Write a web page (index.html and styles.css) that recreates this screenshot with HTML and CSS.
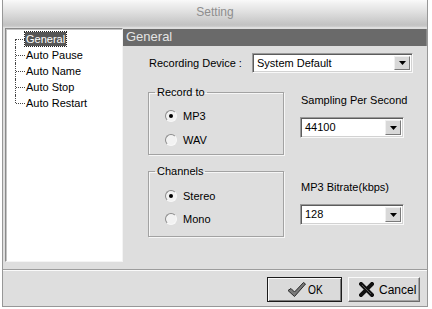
FILE: index.html
```html
<!DOCTYPE html>
<html>
<head>
<meta charset="utf-8">
<link rel="stylesheet" href="styles.css">
</head>
<body>
<div class="window">
  <div class="titlebar"><span class="title">Setting</span></div>
  <div class="main">
    <div class="tree">
      <ul class="tree-list">
        <li class="node first"><span class="label selected">General</span></li>
        <li class="node"><span class="label">Auto Pause</span></li>
        <li class="node"><span class="label">Auto Name</span></li>
        <li class="node"><span class="label">Auto Stop</span></li>
        <li class="node last"><span class="label">Auto Restart</span></li>
      </ul>
    </div>
    <div class="panel">
      <div class="panel-head">General</div>
      <div class="panel-body">
        <div class="device-row">
          <span class="device-label">Recording Device :</span>
          <div class="combo combo-wide">
            <span class="combo-text">System Default</span>
            <span class="combo-btn"><svg width="7" height="4" viewBox="0 0 7 4"><path d="M0 0H7L3.5 4Z" fill="#000"/></svg></span>
          </div>
        </div>
        <div class="cols">
          <div class="col-left">
            <fieldset class="group g1">
              <legend>Record to</legend>
              <div class="radio-row"><span class="radio checked"></span><span>MP3</span></div>
              <div class="radio-row"><span class="radio"></span><span>WAV</span></div>
            </fieldset>
            <fieldset class="group g2">
              <legend>Channels</legend>
              <div class="radio-row"><span class="radio checked"></span><span>Stereo</span></div>
              <div class="radio-row"><span class="radio"></span><span>Mono</span></div>
            </fieldset>
          </div>
          <div class="col-right">
            <div class="field-label l1">Sampling Per Second</div>
            <div class="combo combo-small">
              <span class="combo-text">44100</span>
              <span class="combo-btn"><svg width="7" height="4" viewBox="0 0 7 4"><path d="M0 0H7L3.5 4Z" fill="#000"/></svg></span>
            </div>
            <div class="field-label l2">MP3 Bitrate(kbps)</div>
            <div class="combo combo-small">
              <span class="combo-text">128</span>
              <span class="combo-btn"><svg width="7" height="4" viewBox="0 0 7 4"><path d="M0 0H7L3.5 4Z" fill="#000"/></svg></span>
            </div>
          </div>
        </div>
      </div>
    </div>
  </div>
  <div class="footer">
    <button class="btn btn-ok">
      <svg class="icon" width="19" height="17" viewBox="0 0 19 17"><path d="M1 9.5L4 7.5L7.5 11L16.5 1.5L18.5 3L7.5 15.5Z" fill="#7a7a7a" stroke="#2a2a2a" stroke-width="1" stroke-linejoin="round"/></svg>
      <span class="btn-text">OK</span>
    </button>
    <button class="btn btn-cancel">
      <svg class="icon" width="15" height="15" viewBox="0 0 15 15"><path d="M2 2L13 13M13 2L2 13" stroke="#111" stroke-width="4" stroke-linecap="square"/><path d="M3 3L12 12" stroke="#555" stroke-width="1"/></svg>
      <span class="btn-text">Cancel</span>
    </button>
  </div>
</div>
</body>
</html>
```
FILE: styles.css
```css
* { box-sizing: border-box; }
html, body { margin: 0; padding: 0; background: #fff; }
body {
  font-family: "Liberation Sans", Arial, sans-serif;
  font-size: 11px;
  color: #000;
  width: 432px;
  height: 309px;
  overflow: hidden;
}
.window {
  margin-left: 2px;
  width: 426px;
  height: 307px;
  border: 1px solid #979797;
  border-top: none;
  background: #dedede;
  display: flex;
  flex-direction: column;
}
.titlebar {
  height: 27px;
  flex: none;
  background: linear-gradient(#fafafa 0px, #f0f0f0 4px, #e6e6e6 9px, #d2d2d2 18px, #c2c2c2 25px, #cfcfcf 27px);
  display: flex;
  justify-content: center;
  align-items: flex-start;
  padding-top: 5px;
}
.title {
  font-size: 12px;
  color: #8e8e8e;
  line-height: 14px;
}
.main {
  height: 242px;
  flex: none;
  display: flex;
  align-items: flex-start;
  padding: 1px 0 0 2px;
}
.tree {
  width: 118px;
  height: 234px;
  flex: none;
  background: #fff;
  border: 1px solid;
  border-color: #8a8a8a #f4f4f4 #f4f4f4 #8a8a8a;
  box-shadow: inset 1px 1px #c4c4c4;
  padding-top: 2px;
}
.tree-list {
  list-style: none;
  margin: 0 0 0 9px;
  padding: 0;
}
.node {
  position: relative;
  height: 16px;
  line-height: 16px;
  padding-left: 10px;
  display: flex;
  align-items: center;
}
.node::before {
  content: "";
  position: absolute;
  left: 0;
  top: 0;
  bottom: 0;
  border-left: 1px dotted #444;
}
.node.first::before { top: 8px; }
.node.last::before { bottom: 8px; }
.node::after {
  content: "";
  position: absolute;
  left: 1px;
  top: 8px;
  width: 9px;
  border-top: 1px dotted #444;
}
.label {
  padding: 0 1px;
  line-height: 14px;
  height: 14px;
}
.selected {
  background: #565656;
  color: #fff;
  outline: 1px dotted #222;
}
.panel {
  flex: 1;
  height: 234px;
  display: flex;
  flex-direction: column;
}
.panel-head {
  margin-top: 1px;
  height: 17px;
  background: #6a6a6a;
  color: #e4e4e4;
  font-size: 13px;
  line-height: 16px;
  padding-left: 3px;
  border-right: 1px solid #8a8a8a;
}
.panel-body {
  padding: 7px 0 0 25px;
}
.device-row {
  display: flex;
  align-items: center;
  height: 20px;
}
.device-label {
  width: 104px;
  padding-left: 1px;
}
.combo {
  display: flex;
  background: #fff;
  border: 1px solid;
  border-color: #9a9a9a #f8f8f8 #f8f8f8 #9a9a9a;
  box-shadow: inset 1px 1px #5c5c5c, inset -1px -1px #d2d2d2;
  padding: 2px 2px 2px 3px;
  align-items: stretch;
}
.combo-wide { width: 161px; height: 20px; }
.combo-small { width: 104px; height: 21px; }
.combo-text {
  flex: 1;
  line-height: 15px;
  padding-left: 1px;
}
.combo-btn {
  width: 16px;
  background: #d8d8d8;
  border: 1px solid;
  border-color: #f0f0f0 #7a7a7a #7a7a7a #f0f0f0;
  display: flex;
  align-items: center;
  justify-content: center;
}
.cols {
  display: flex;
  margin-top: 13px;
}
.col-left {
  width: 136px;
  flex: none;
  display: flex;
  flex-direction: column;
}
.group {
  margin: 0;
  min-width: 0;
  border: 1px solid #a2a2a2;
  box-shadow: 1px 1px #f6f6f6, inset 1px 1px #f6f6f6;
  padding: 0 0 0 16px;
}
.group legend {
  margin-left: -10px;
  padding: 0 2px;
  line-height: 13px;
  height: 13px;
}
.g1 { padding-top: 9px; padding-bottom: 6px; }
.g2 { margin-top: 10px; padding-top: 10px; padding-bottom: 9px; }
.radio-row {
  display: flex;
  align-items: center;
  height: 16px;
  gap: 6px;
}
.g1 .radio-row + .radio-row { margin-top: 8px; }
.g2 .radio-row + .radio-row { margin-top: 7px; }
.radio {
  width: 12px;
  height: 12px;
  border-radius: 50%;
  border: 1px solid;
  border-color: #8c8c8c #f8f8f8 #f8f8f8 #8c8c8c;
  background: #f2f2f2;
  display: flex;
  align-items: center;
  justify-content: center;
}
.radio.checked::after {
  content: "";
  width: 4px;
  height: 4px;
  border-radius: 50%;
  background: #000;
}
.col-right {
  margin-left: 16px;
  width: 104px;
  display: flex;
  flex-direction: column;
}
.field-label {
  line-height: 13px;
  height: 13px;
  padding-left: 1px;
  white-space: nowrap;
}
.l1 { margin-top: 8px; margin-bottom: 10px; }
.l2 { margin-top: 43px; margin-bottom: 10px; }
.footer {
  flex: 1;
  border-top: 1px solid #9c9c9c;
  box-shadow: inset 0 1px #fafafa;
  padding: 7px 7px 0 0;
  display: flex;
  justify-content: flex-end;
  gap: 6px;
}
.btn {
  height: 25px;
  font-family: "Liberation Sans", Arial, sans-serif;
  font-size: 12px;
  color: #000;
  background: #dadada;
  display: flex;
  align-items: center;
  gap: 2px;
  padding: 0;
  margin: 0;
}
.btn-ok {
  width: 75px;
  border: 1px solid #1c1c1c;
  box-shadow: inset 1px 1px #fafafa, inset -1px -1px #7c7c7c;
  padding-left: 19px;
}
.btn-ok .btn-text { transform: scaleX(0.85); transform-origin: left center; }
.btn-cancel {
  width: 72px;
  border: 1px solid;
  border-color: #fafafa #6c6c6c #6c6c6c #fafafa;
  box-shadow: inset -1px -1px #a4a4a4;
  padding-left: 10px;
  gap: 5px;
}
.icon { flex: none; }
```
